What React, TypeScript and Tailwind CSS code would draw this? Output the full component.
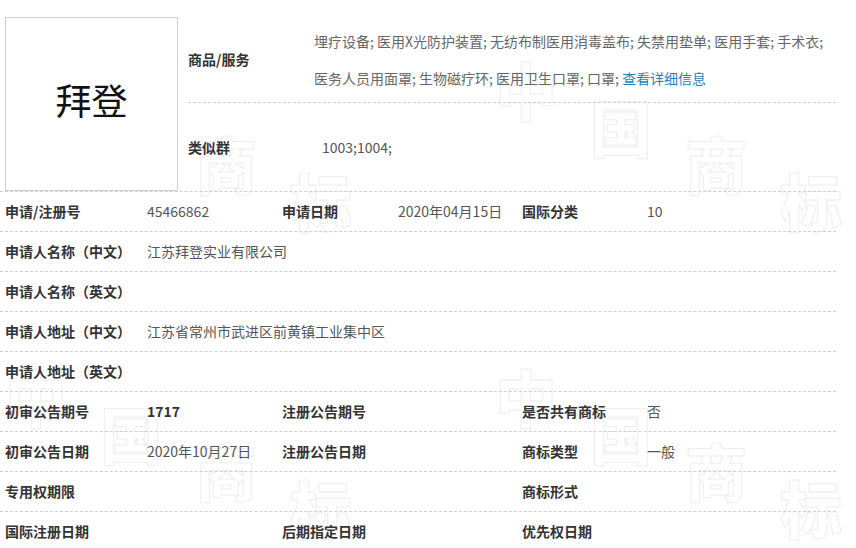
import React from 'react';

type Cell = { text?: string; label?: boolean; bold?: boolean; span?: number };

const rows: Cell[][] = [
  [
    { text: '申请/注册号', label: true },
    { text: '45466862' },
    { text: '申请日期', label: true },
    { text: '2020年04月15日' },
    { text: '国际分类', label: true },
    { text: '10' },
  ],
  [{ text: '申请人名称（中文）', label: true }, { text: '江苏拜登实业有限公司', span: 5 }],
  [{ text: '申请人名称（英文）', label: true }, { text: '', span: 5 }],
  [{ text: '申请人地址（中文）', label: true }, { text: '江苏省常州市武进区前黄镇工业集中区', span: 5 }],
  [{ text: '申请人地址（英文）', label: true }, { text: '', span: 5 }],
  [
    { text: '初审公告期号', label: true },
    { text: '1717', bold: true },
    { text: '注册公告期号', label: true },
    { text: '' },
    { text: '是否共有商标', label: true },
    { text: '否' },
  ],
  [
    { text: '初审公告日期', label: true },
    { text: '2020年10月27日' },
    { text: '注册公告日期', label: true },
    { text: '' },
    { text: '商标类型', label: true },
    { text: '一般' },
  ],
  [
    { text: '专用权期限', label: true },
    { text: '' },
    { text: '' },
    { text: '' },
    { text: '商标形式', label: true },
    { text: '' },
  ],
  [
    { text: '国际注册日期', label: true },
    { text: '' },
    { text: '后期指定日期', label: true },
    { text: '' },
    { text: '优先权日期', label: true },
    { text: '' },
  ],
];

// faint hollow "中国商标" watermark, repeated
const marks = [
  { x: 5, y: 58 },
  { x: 495, y: 58 },
  { x: 5, y: 365 },
  { x: 495, y: 365 },
];

function Watermark() {
  return (
    <div aria-hidden className="absolute inset-0 pointer-events-none select-none">
      {marks.map((m, i) =>
        ['中', '国', '商', '标'].map((ch, j) => (
          <span
            key={`${i}-${j}`}
            className="absolute text-[62px] leading-none font-black text-transparent [-webkit-text-stroke:1px_#eeeeee]"
            style={{ left: m.x + j * 95, top: m.y + j * 37 }}
          >
            {ch}
          </span>
        ))
      )}
    </div>
  );
}

export default function App() {
  return (
    <div className="relative w-[856px] h-[548px] bg-white overflow-hidden font-['Noto_Sans_CJK_SC',sans-serif] text-[14px]">
      <Watermark />

      <div className="relative pt-[17px]">
        {/* top: logo box + goods */}
        <div className="flex">
          <div className="ml-[5px] w-[173px] h-[174px] pb-[10px] border border-[#cfcfcf] bg-white flex items-center justify-center">
            <span className="text-[36px] text-[#111] leading-none">拜登</span>
          </div>

          <div className="ml-[10px] w-[648px]">
            <div className="flex items-center h-[86px] border-b border-dashed border-[#cfcfcf]">
              <div className="w-[126px] font-bold text-[#333]">商品/服务</div>
              <div className="flex-1 leading-[37px] text-[#666] whitespace-nowrap">
                <div>埋疗设备; 医用X光防护装置; 无纺布制医用消毒盖布; 失禁用垫单; 医用手套; 手术衣;</div>
                <div>
                  医务人员用面罩; 生物磁疗环; 医用卫生口罩; 口罩;{' '}
                  <span className="text-[#2c7fb6]">查看详细信息</span>
                </div>
              </div>
            </div>
            <div className="flex items-center h-[88px]">
              <div className="w-[126px] font-bold text-[#333]">类似群</div>
              <div className="pl-2 text-[#555]">1003;1004;</div>
            </div>
          </div>
        </div>

        {/* detail table */}
        <div className="w-[836px] border-t border-dashed border-[#cfcfcf]">
          {rows.map((row, i) => (
            <div
              key={i}
              className="grid grid-cols-[142px_135px_116px_124px_125px_1fr] items-center h-[40px] pl-[5px] border-b border-dashed border-[#cfcfcf]"
            >
              {row.map((c, j) => (
                <div
                  key={j}
                  className={
                    c.span === 5
                      ? 'col-span-5 whitespace-nowrap text-[#555]'
                      : c.label || c.bold
                      ? 'whitespace-nowrap font-bold text-[#333]'
                      : 'whitespace-nowrap text-[#555]'
                  }
                >
                  {c.text}
                </div>
              ))}
            </div>
          ))}
        </div>
      </div>
    </div>
  );
}
